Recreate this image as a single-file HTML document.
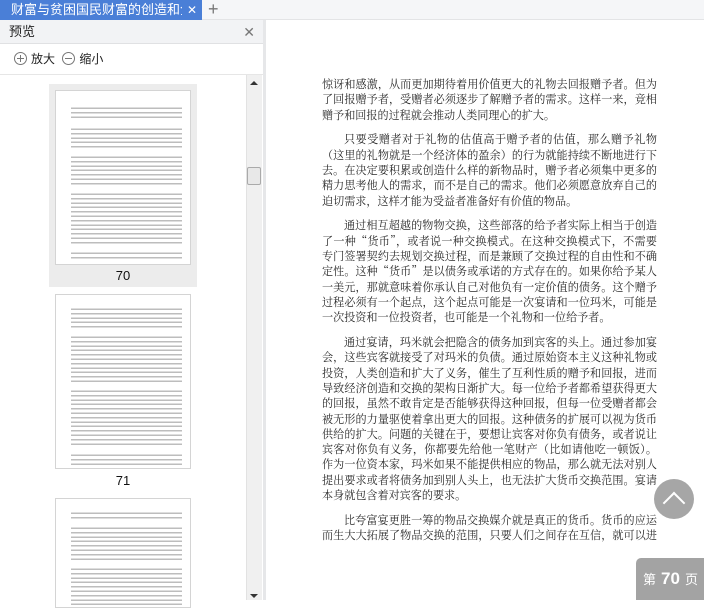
<!DOCTYPE html>
<html><head><meta charset="utf-8"><style>
*{margin:0;padding:0;box-sizing:border-box}
body{width:704px;height:600px;overflow:hidden;background:#fff;font-family:"Liberation Sans","Noto Sans CJK SC",sans-serif;position:relative}
.topbar{position:absolute;left:0;top:0;width:704px;height:20px;background:#f5f6f8;border-bottom:1px solid #e3e4e6}
.tab{position:absolute;left:0;top:0;width:202px;height:20px;background:#4a7fd7;color:#fff;font-size:13px;line-height:20px;padding-left:11px;white-space:nowrap;overflow:hidden}
.tab .x{position:absolute;right:0;top:0;width:20px;height:20px;background:#4a7fd7;text-align:center;font-size:12px}
.plus{position:absolute;left:208px;top:-1px;font-size:18px;color:#777;font-weight:300}
.left{position:absolute;left:0;top:20px;width:263px;height:580px;background:#fff}
.hdr{height:24px;background:#f2f3f5;border-bottom:1px solid #e0e1e3;font-size:13px;line-height:24px;padding-left:9px;color:#222;position:relative}
.hdr .x{position:absolute;right:8px;top:0;color:#777;font-size:14px}
.zoomrow{height:31px;border-bottom:1px solid #e6e6e6;font-size:12px;line-height:31px;color:#222;padding-left:14px}
.mag{display:inline-block;width:13px;height:13px;border:1px solid #777;border-radius:50%;vertical-align:-2px;position:relative;margin-right:4px}
.mag:before{content:"";position:absolute;left:2px;top:5px;width:7px;height:1px;background:#777}
.mag.p:after{content:"";position:absolute;left:5px;top:2px;width:1px;height:7px;background:#777}
.divider{position:absolute;left:263px;top:20px;width:3px;height:580px;background:#e6e7e9}
.sel{position:absolute;left:49px;top:84px;width:148px;height:203px;background:#ececec}
.thumb{position:absolute;left:55px;width:136px;background:#fff;border:1px solid #d4d4d4;overflow:hidden}
.lbl{position:absolute;left:49px;width:148px;text-align:center;font-size:13px;color:#111}
.tp{position:absolute;left:15px;width:111px;background:repeating-linear-gradient(#fff 0,#fff 1.5px,#bdbdbd 1.5px,#bdbdbd 3px,#fff 3px,#fff 4.4px)}
.sb{position:absolute;left:246px;top:75px;width:16px;height:525px;background:#f0f0f0;border-left:1px solid #e2e2e2}
.sbt{position:absolute;left:247px;top:167px;width:14px;height:18px;background:#e8e8e8;border:1px solid #aaa;border-radius:2px}
.arr{position:absolute;left:250px;width:0;height:0;border-left:4px solid transparent;border-right:4px solid transparent}
.l{position:absolute;left:322px;width:335px;height:14px;font-family:"Noto Serif CJK SC","Liberation Serif",serif;font-size:11.1px;line-height:14px;color:#2a2a2a;text-align:justify;text-align-last:justify;white-space:nowrap}
.l.i{left:344px;width:313px}
.l.e{text-align-last:left}
.up{position:absolute;left:654px;top:479px;width:40px;height:40px;border-radius:50%;background:#a6a6a6}
.up:after{content:"";position:absolute;left:12px;top:16px;width:14px;height:14px;border-left:2.5px solid #fff;border-top:2.5px solid #fff;transform:rotate(45deg)}
.pg{position:absolute;left:636px;top:558px;width:80px;height:42px;background:#a3a3a3;border-radius:5px 0 0 0;color:#fff;font-size:13px;line-height:42px;padding-left:7px;white-space:nowrap}
.pg b{font-size:17px;margin:0 5px}
</style></head><body>
<div class="topbar"><div class="tab">财富与贫困国民财富的创造和企业<span class="x">✕</span></div><div class="plus">+</div></div>
<div class="left">
<div class="hdr">预览<span class="x">✕</span></div>
<div class="zoomrow"><span class="mag p"></span>放大 <span class="mag" style="margin-left:4px"></span>缩小</div>
</div>
<div class="sel"></div>
<div class="thumb" style="top:90px;height:175px">
<div class="tp" style="top:15px;height:13px"></div>
<div class="tp" style="top:36px;height:22px"></div>
<div class="tp" style="top:64px;height:31px"></div>
<div class="tp" style="top:101px;height:53px"></div>
<div class="tp" style="top:160px;height:9px"></div>
</div>
<div class="lbl" style="top:268px">70</div>
<div class="thumb" style="top:294px;height:175px">
<div class="tp" style="top:12px;height:22px"></div>
<div class="tp" style="top:40px;height:48px"></div>
<div class="tp" style="top:94px;height:58px"></div>
<div class="tp" style="top:158px;height:13px"></div>
</div>
<div class="lbl" style="top:473px">71</div>
<div class="thumb" style="top:498px;height:110px">
<div class="tp" style="top:12px;height:9px"></div>
<div class="tp" style="top:27px;height:35px"></div>
<div class="tp" style="top:68px;height:38px"></div>
</div>
<div class="sb"></div>
<div class="arr" style="top:81px;border-bottom:4px solid #333"></div>
<div class="sbt"></div>
<div class="arr" style="top:594px;border-top:4px solid #333"></div>
<div class="divider"></div>

<div class="l" style="top:77px">惊讶和感激，从而更加期待着用价值更大的礼物去回报赠予者。但为</div>
<div class="l" style="top:92.3px">了回报赠予者，受赠者必须逐步了解赠予者的需求。这样一来，竞相</div>
<div class="l e" style="top:107.6px">赠予和回报的过程就会推动人类同理心的扩大。</div>

<div class="l i" style="top:132.4px">只要受赠者对于礼物的估值高于赠予者的估值，那么赠予礼物</div>
<div class="l" style="top:147.7px">（这里的礼物就是一个经济体的盈余）的行为就能持续不断地进行下</div>
<div class="l" style="top:163px">去。在决定要积累或创造什么样的新物品时，赠予者必须集中更多的</div>
<div class="l" style="top:178.3px">精力思考他人的需求，而不是自己的需求。他们必须愿意放弃自己的</div>
<div class="l e" style="top:193.6px">迫切需求，这样才能为受益者准备好有价值的物品。</div>

<div class="l i" style="top:218.4px">通过相互超越的物物交换，这些部落的给予者实际上相当于创造</div>
<div class="l" style="top:233.7px">了一种“货币”，或者说一种交换模式。在这种交换模式下，不需要</div>
<div class="l" style="top:249px">专门签署契约去规划交换过程，而是兼顾了交换过程的自由性和不确</div>
<div class="l" style="top:264.3px">定性。这种“货币”是以债务或承诺的方式存在的。如果你给予某人</div>
<div class="l" style="top:279.6px">一美元，那就意味着你承认自己对他负有一定价值的债务。这个赠予</div>
<div class="l" style="top:294.9px">过程必须有一个起点，这个起点可能是一次宴请和一位玛米，可能是</div>
<div class="l e" style="top:310.2px">一次投资和一位投资者，也可能是一个礼物和一位给予者。</div>

<div class="l i" style="top:335px">通过宴请，玛米就会把隐含的债务加到宾客的头上。通过参加宴</div>
<div class="l" style="top:350.3px">会，这些宾客就接受了对玛米的负债。通过原始资本主义这种礼物或</div>
<div class="l" style="top:365.6px">投资，人类创造和扩大了义务，催生了互利性质的赠予和回报，进而</div>
<div class="l" style="top:380.9px">导致经济创造和交换的架构日渐扩大。每一位给予者都希望获得更大</div>
<div class="l" style="top:396.2px">的回报，虽然不敢肯定是否能够获得这种回报，但每一位受赠者都会</div>
<div class="l" style="top:411.5px">被无形的力量驱使着拿出更大的回报。这种债务的扩展可以视为货币</div>
<div class="l" style="top:426.8px">供给的扩大。问题的关键在于，要想让宾客对你负有债务，或者说让</div>
<div class="l" style="top:442.1px">宾客对你负有义务，你都要先给他一笔财产（比如请他吃一顿饭）。</div>
<div class="l" style="top:457.4px">作为一位资本家，玛米如果不能提供相应的物品，那么就无法对别人</div>
<div class="l" style="top:472.7px">提出要求或者将债务加到别人头上，也无法扩大货币交换范围。宴请</div>
<div class="l e" style="top:488px">本身就包含着对宾客的要求。</div>

<div class="l i" style="top:512.8px">比夸富宴更胜一筹的物品交换媒介就是真正的货币。货币的应运</div>
<div class="l" style="top:528.1px">而生大大拓展了物品交换的范围，只要人们之间存在互信，就可以进</div>

<div class="up"></div>
<div class="pg">第<b>70</b>页</div>
</body></html>
